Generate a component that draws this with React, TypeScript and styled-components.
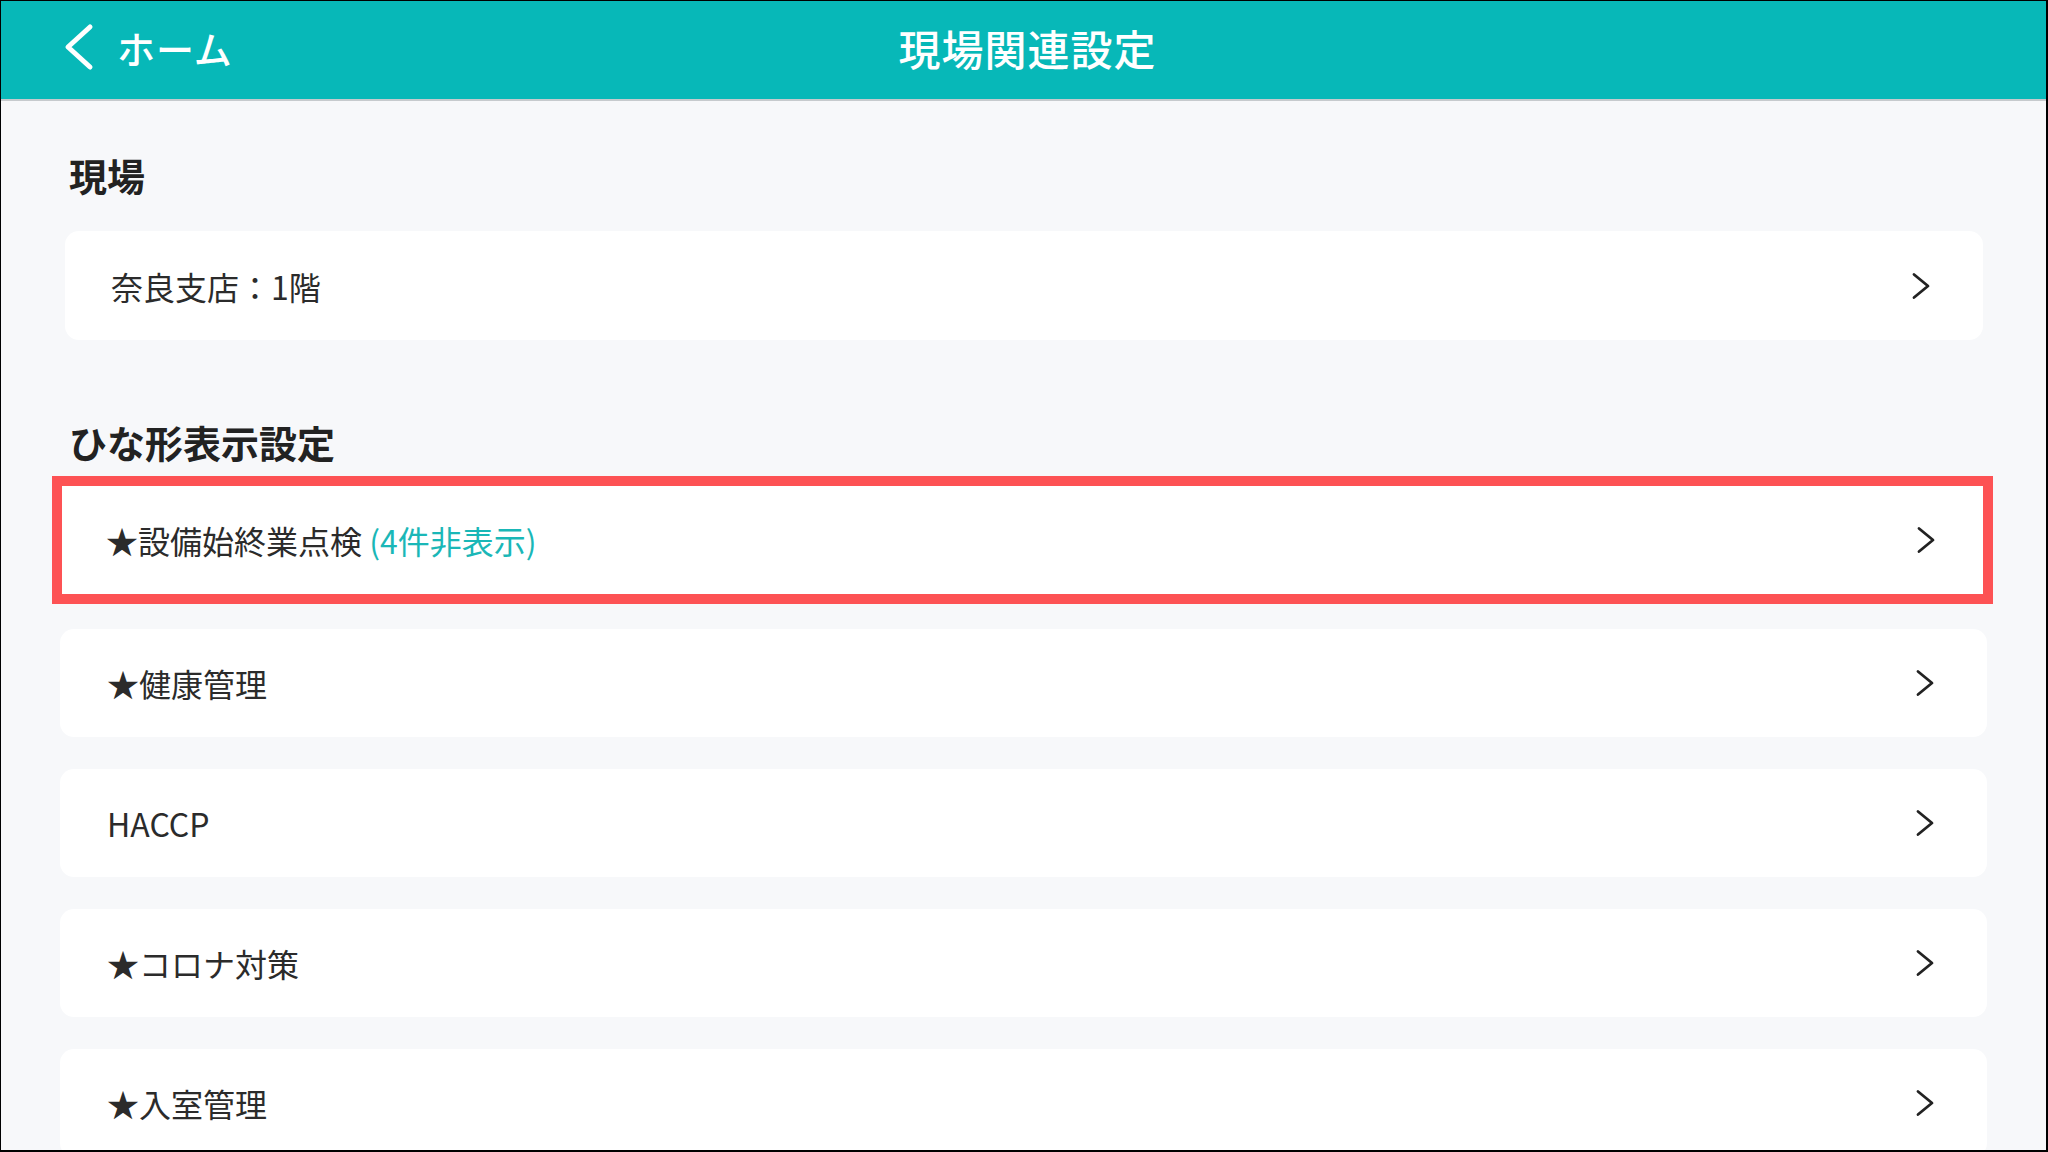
import React from "react";
import styled, { createGlobalStyle } from "styled-components";

const GlobalStyle = createGlobalStyle`
  html, body {
    margin: 0;
    padding: 0;
    background: #000;
  }
  body {
    font-family: "Noto Sans CJK JP", "Noto Sans", sans-serif;
  }
`;

type Template = {
  name: string;
  hidden?: number;
  highlighted?: boolean;
};

const templates: Template[] = [
  { name: "★設備始終業点検", hidden: 4, highlighted: true },
  { name: "★健康管理" },
  { name: "HACCP" },
  { name: "★コロナ対策" },
  { name: "★入室管理" },
];

const Chevron: React.FC = () => (
  <svg width="20" height="28" viewBox="0 0 20 28">
    <polyline
      points="3,2.5 17,14 3,25.5"
      fill="none"
      stroke="#222"
      strokeWidth="2.8"
      strokeLinecap="round"
      strokeLinejoin="round"
    />
  </svg>
);

const BackIcon: React.FC = () => (
  <svg width="34" height="48" viewBox="0 0 34 48">
    <polyline
      points="29,4 7,24 29,44"
      fill="none"
      stroke="#fff"
      strokeWidth="5"
      strokeLinecap="round"
      strokeLinejoin="round"
    />
  </svg>
);

const App: React.FC = () => {
  return (
    <>
      <GlobalStyle />
      <Screen>
        <Header>
          <BackButton>
            <BackIcon />
            <span>ホーム</span>
          </BackButton>
          <Title>現場関連設定</Title>
          <div />
        </Header>
        <Body>
          <SectionTitle $bottom={32}>現場</SectionTitle>
          <SiteCard>
            <ItemText>奈良支店：1階</ItemText>
            <Chevron />
          </SiteCard>

          <SectionTitle $top={78} $bottom={10}>
            ひな形表示設定
          </SectionTitle>
          <List>
            {templates.map((t) => (
              <Card key={t.name} $highlighted={t.highlighted}>
                <ItemText>
                  {t.name}
                  {t.hidden ? <Hidden> ({t.hidden}件非表示)</Hidden> : null}
                </ItemText>
                <Chevron />
              </Card>
            ))}
          </List>
        </Body>
      </Screen>
    </>
  );
};

const Screen = styled.div`
  width: 2048px;
  height: 1152px;
  box-sizing: border-box;
  border-style: solid;
  border-color: #000;
  border-width: 1px 2px 2px 1px;
  background: #f7f8fa;
  overflow: hidden;
  display: flex;
  flex-direction: column;
`;

const Header = styled.header`
  flex: none;
  height: 100px;
  box-sizing: border-box;
  padding-bottom: 6px;
  background: #07b8b8;
  border-bottom: 2px solid #c6cacd;
  display: grid;
  grid-template-columns: 1fr auto 1fr;
  align-items: center;
`;

const BackButton = styled.div`
  display: flex;
  align-items: center;
  gap: 22px;
  padding-left: 60px;
  color: #fff;
  font-size: 38px;
  font-weight: 500;
  letter-spacing: 1px;
`;

const Title = styled.h1`
  margin: 0;
  color: #fff;
  font-size: 42px;
  font-weight: 500;
  letter-spacing: 1px;
  padding-left: 8px;
`;

const Body = styled.main`
  display: flex;
  flex-direction: column;
  padding: 50px 0 0;
`;

const SectionTitle = styled.h2<{ $top?: number; $bottom?: number }>`
  margin: ${(p) => p.$top ?? 0}px 0 ${(p) => p.$bottom ?? 0}px 68px;
  font-size: 38px;
  line-height: 48px;
  font-weight: 700;
  color: #222;
`;

const SiteCard = styled.div`
  margin: 0 63px 0 64px;
  height: 109px;
  background: #fff;
  border-radius: 14px;
  display: flex;
  align-items: center;
  justify-content: space-between;
  padding: 0 52px 0 46px;
  box-sizing: border-box;
`;

const List = styled.div`
  display: flex;
  flex-direction: column;
  gap: 32px;
  padding: 0 59px 0 59px;
`;

const Card = styled.div<{ $highlighted?: boolean }>`
  flex: none;
  height: ${(p) => (p.$highlighted ? 128 : 108)}px;
  box-sizing: border-box;
  background: #fff;
  border-radius: ${(p) => (p.$highlighted ? 0 : 14)}px;
  border: ${(p) => (p.$highlighted ? "10px solid #fd5254" : "none")};
  margin: ${(p) => (p.$highlighted ? "0 -6px -7px -8px" : "0")};
  display: flex;
  align-items: center;
  justify-content: space-between;
  padding: ${(p) => (p.$highlighted ? "0 47px 0 44px" : "0 52px 0 47px")};
`;

const ItemText = styled.span`
  font-size: 32px;
  color: #2b2b2b;
  white-space: pre;
`;

const Hidden = styled.span`
  color: #1ab7b7;
`;

export default App;
